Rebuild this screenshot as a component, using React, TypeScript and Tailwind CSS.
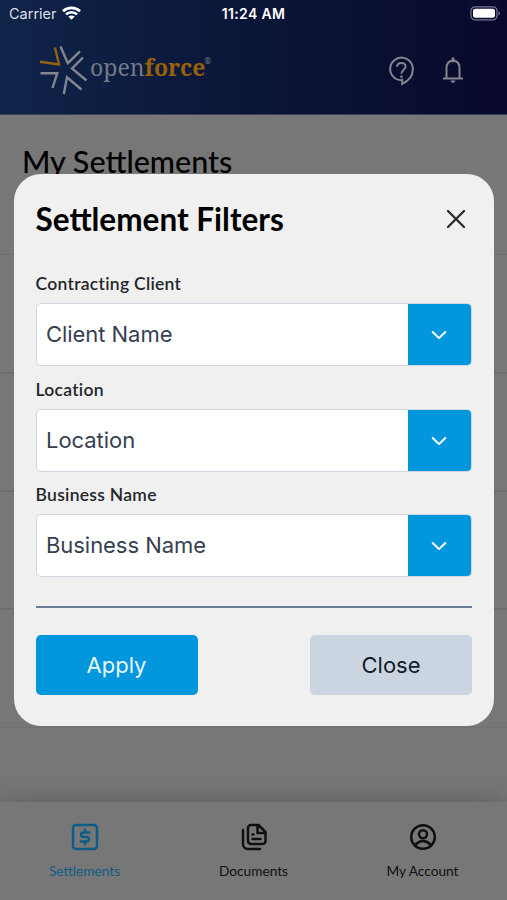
import React from "react";

function StatusBar() {
  return (
    <div className="flex h-7 items-center justify-between pl-[9px] pr-[6px] font-['Inter',sans-serif] text-white">
      <div className="flex w-[150px] items-center gap-[6px] text-[14.5px] leading-none">
        <span className="text-[#dcdfe8]">Carrier</span>
        <svg className="-mt-[2px] -ml-px" width="19" height="14" viewBox="0 0 19 14" fill="none" stroke="white" strokeWidth="2.7">
          <path d="M1 5.2C5.7.7 13.3.7 18 5.2" />
          <path d="M4 8.4c3-2.9 8-2.9 11 0" />
          <path d="M6.3 10.6c1.7-1.5 4.7-1.5 6.4 0l-3.2 3.2z" fill="white" stroke="none" />
        </svg>
      </div>
      <span className="-ml-[3px] text-[14px] font-semibold leading-none tracking-[0.35px]">11:24 AM</span>
      <div className="flex w-[150px] justify-end">
        <svg className="-mt-px" width="31" height="15" viewBox="0 0 31 15">
          <rect x="1" y="0.8" width="26" height="13" rx="4" fill="none" stroke="#777a9b" strokeWidth="1.2" />
          <rect x="3" y="2.8" width="22" height="9" rx="2.2" fill="white" />
          <path d="M28.5 5.2q3 2.1 0 4.3z" fill="#777a9b" />
        </svg>
      </div>
    </div>
  );
}

function Logo() {
  return (
    <div className="flex items-start">
      <svg width="52" height="52" viewBox="0 0 52 52" fill="none" strokeWidth="2.4" stroke="#84868f">
        <path d="M2 18.7 21 21.5 17 4.5" stroke="#966313" />
        <path d="M22.5 3.5l7.3 16.7L42 8.3" />
        <path d="M45 14.5 34 25.5 48.5 37.5" />
        <path d="M43.5 46.5 29 34.3 25.8 51" />
        <path d="M2.5 30.2h16.8L14.5 45" />
      </svg>
      <div className="mt-[9px] flex items-start font-['Noto_Serif','DejaVu_Serif',serif] text-[23px] leading-[30px]">
        <span className="text-[#747986]">open</span>
        <span className="font-bold text-[#9a6208]">force</span>
        <span className="-ml-px text-[8px] leading-[18px] text-[#747986]">®</span>
      </div>
    </div>
  );
}

function HelpIcon() {
  return (
    <svg width="30" height="32" viewBox="0 0 30 32" fill="none" stroke="#85868c" strokeWidth="2">
      <path d="M16.2 24.8v4.1c5.3-2.6 10.5-7.2 10.5-13.7A11.3 11.3 0 1 0 15.3 25.2z" />
      <path d="M11 11.8c.1-5 8.6-5.2 8.6-.2 0 3.2-4.2 3.3-4.2 7.2" />
      <path d="M15.4 20.5v2.3" strokeWidth="2.3" />
    </svg>
  );
}

function BellIcon() {
  return (
    <svg width="24" height="30" viewBox="0 0 24 30" fill="none" stroke="#85868c" strokeWidth="2">
      <path d="M5.5 23.4V13.5C5.5 8.5 8 5.8 12 5.8s6.5 2.7 6.5 7.7v9.9M2 23.4h20" />
      <path d="M12 3.7v2" strokeWidth="3" strokeLinecap="round" />
      <path d="M9.7 25.4h4.6c0 3-4.6 3-4.6 0z" fill="#85868c" stroke="none" />
    </svg>
  );
}

function Select({ label, value }: { label: string; value: string }) {
  return (
    <div className="flex h-[105.5px] flex-col">
      <label className="h-[30px] font-['Lato',sans-serif] text-[17.5px] font-semibold leading-[22px] tracking-[0.28px] text-[#25272b]">{label}</label>
      <div className="flex h-[63px] overflow-hidden rounded-[5px] border border-[#d0d6df] bg-white">
        <div className="flex flex-1 items-center pl-[9.5px] font-['Inter',sans-serif] text-[22px] tracking-[-0.05px] text-[#363f51]">{value}</div>
        <div className="flex w-[63px] items-center justify-center bg-[#0296dd]">
          <svg className="mr-px mt-px" width="16" height="10" viewBox="0 0 16 10" fill="none" stroke="white" strokeWidth="2" strokeLinecap="round" strokeLinejoin="round">
            <path d="M1.7 2 8 8.1 14.3 2" />
          </svg>
        </div>
      </div>
    </div>
  );
}

function Tab({ label, active, children }: { label: string; active?: boolean; children: React.ReactNode }) {
  return (
    <div className={`flex flex-1 flex-col items-center pt-5 ${active ? "text-[#0d5c86]" : "text-[#101010]"}`}>
      <svg className="ml-px" width="30" height="30" viewBox="0 0 30 30" fill="none" stroke="currentColor" strokeWidth="2.5" strokeLinecap="round" strokeLinejoin="round">
        {children}
      </svg>
      <span className="mt-[9px] font-['Lato',sans-serif] text-[13.7px] leading-[20px]">{label}</span>
    </div>
  );
}

export default function App() {
  return (
    <div className="relative flex h-[900px] w-[507px] flex-col overflow-hidden bg-[#777777]">
      <header className="h-[115px] border-b border-[#3d4252] bg-gradient-to-r from-[#10244a] via-[#0a1537] to-[#09092c]">
        <StatusBar />
        <div className="flex justify-between pl-[38px] pr-[42px] pt-[15px]">
          <Logo />
          <div className="flex gap-[25px] pt-[12px]">
            <HelpIcon />
            <BellIcon />
          </div>
        </div>
      </header>
      <main className="flex-1">
        <div className="h-[140px] border-b border-[#6d6d6d] pl-[22px] pt-[26px]">
          <h1 className="font-['Lato',sans-serif] text-[30.5px] font-medium leading-[40px] text-black">My Settlements</h1>
        </div>
        <div className="h-[119px] border-b-2 border-[#6d6d6d]" />
        <div className="h-[118px] border-b-2 border-[#6d6d6d]" />
        <div className="h-[118px] border-b-2 border-[#6d6d6d]" />
        <div className="h-[118px] border-b border-[#707070]" />
      </main>
      <nav className="flex h-[98px] bg-[#777777] shadow-[0_-2px_24px_rgba(0,0,0,0.2)]">
        <Tab label="Settlements" active>
          <rect x="3" y="3" width="24" height="24" rx="3" />
          <path d="M19.3 10.5h-6a2.25 2.25 0 0 0 0 4.5h3.4a2.25 2.25 0 0 1 0 4.5h-6M15 7.8v2.5M15 19.7v2.5" />
        </Tab>
        <Tab label="Documents">
          <path d="M4 8v14a5 5 0 0 0 5 5h12" />
          <path d="M9 6a3 3 0 0 1 3-3h7.5l7 7v9a3 3 0 0 1-3 3H12a3 3 0 0 1-3-3zM18.5 3v8h8M13.5 12.5h1M13.5 17h8" />
        </Tab>
        <Tab label="My Account">
          <circle cx="15" cy="15" r="11.8" />
          <circle cx="15" cy="12.2" r="4" />
          <path d="M7 23q8-8 16 0" />
        </Tab>
      </nav>
      <section className="absolute left-[13.5px] top-[174px] flex h-[552px] w-[480.5px] flex-col rounded-[27px] bg-[#f0f0f0] px-[22px]">
        <div className="flex h-[99px] items-start justify-between pt-[25px]">
          <h2 className="font-['Lato',sans-serif] text-[31.5px] font-bold leading-[40px] text-black">Settlement Filters</h2>
          <svg className="mr-[6px] mt-[10px]" width="20" height="20" viewBox="0 0 20 20" stroke="#2b2b2b" strokeWidth="2.3" strokeLinecap="round">
            <path d="m2 2 16 16M18 2 2 18" />
          </svg>
        </div>
        <Select label="Contracting Client" value="Client Name" />
        <Select label="Location" value="Location" />
        <Select label="Business Name" value="Business Name" />
        <hr className="mt-4 h-[2px] border-0 bg-[#6b7d94]" />
        <div className="mt-[27.5px] flex justify-between font-['Inter',sans-serif] text-[22px]">
          <button className="h-[60px] w-[162px] rounded-[5px] bg-[#0296dd] text-[#e9f8ff]">Apply</button>
          <button className="h-[60px] w-[162px] rounded-[5px] bg-[#cbd5e1] text-[#111c2b]">Close</button>
        </div>
      </section>
    </div>
  );
}
